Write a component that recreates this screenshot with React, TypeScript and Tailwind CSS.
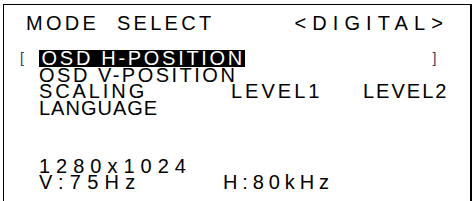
export default function App() {
  return (
    <div className="h-[201px] w-[473px] overflow-hidden bg-white pl-[3px] pt-[4px] text-black font-['Liberation_Sans',Arial,sans-serif]">
      <div className="h-[220px] w-[469px] border-l-[1.5px] border-t-[1.5px] border-r-[2.5px] border-black">
        {/* title */}
        <div className="flex h-[15px] mt-[11px] text-[20px] leading-[15px]">
          <span className="ml-[22px] tracking-[3.3px]">MODE&nbsp;&nbsp;SELECT</span>
          <span className="ml-auto mr-[21px] tracking-[6.1px]">&lt;DIGITAL&gt;</span>
        </div>

        {/* menu */}
        <div className="mt-[19px] text-[20px] leading-[16.5px] tracking-[2.7px]">
          <div className="flex h-[16.5px] items-center">
            <span className="ml-[16px] text-[14px] text-gray-700">[</span>
            <span className="ml-[12px] bg-black pl-[3px] text-white">OSD H-POSITION</span>
            <span className="ml-auto mr-[31px] text-[14px] text-gray-700">]</span>
          </div>
          <div className="pl-[35px] tracking-[2.5px]">OSD V-POSITION</div>
          <div className="flex pl-[35px]">
            <span className="w-[192px] tracking-[2.9px]">SCALING</span>
            <span className="w-[132px] tracking-[3px]">LEVEL1</span>
            <span className="tracking-[2px]">LEVEL2</span>
          </div>
          <div className="pl-[35px] tracking-[1px]">LANGUAGE</div>
        </div>

        {/* signal info */}
        <div className="mt-[42px] pl-[35px] text-[20px] leading-[16px] tracking-[6px]">
          <div>1280x1024</div>
          <div className="flex">
            <span className="w-[184px] tracking-[6.3px]">V:75Hz</span>
            <span className="tracking-[4.9px]">H:80kHz</span>
          </div>
        </div>
      </div>
    </div>
  )
}
